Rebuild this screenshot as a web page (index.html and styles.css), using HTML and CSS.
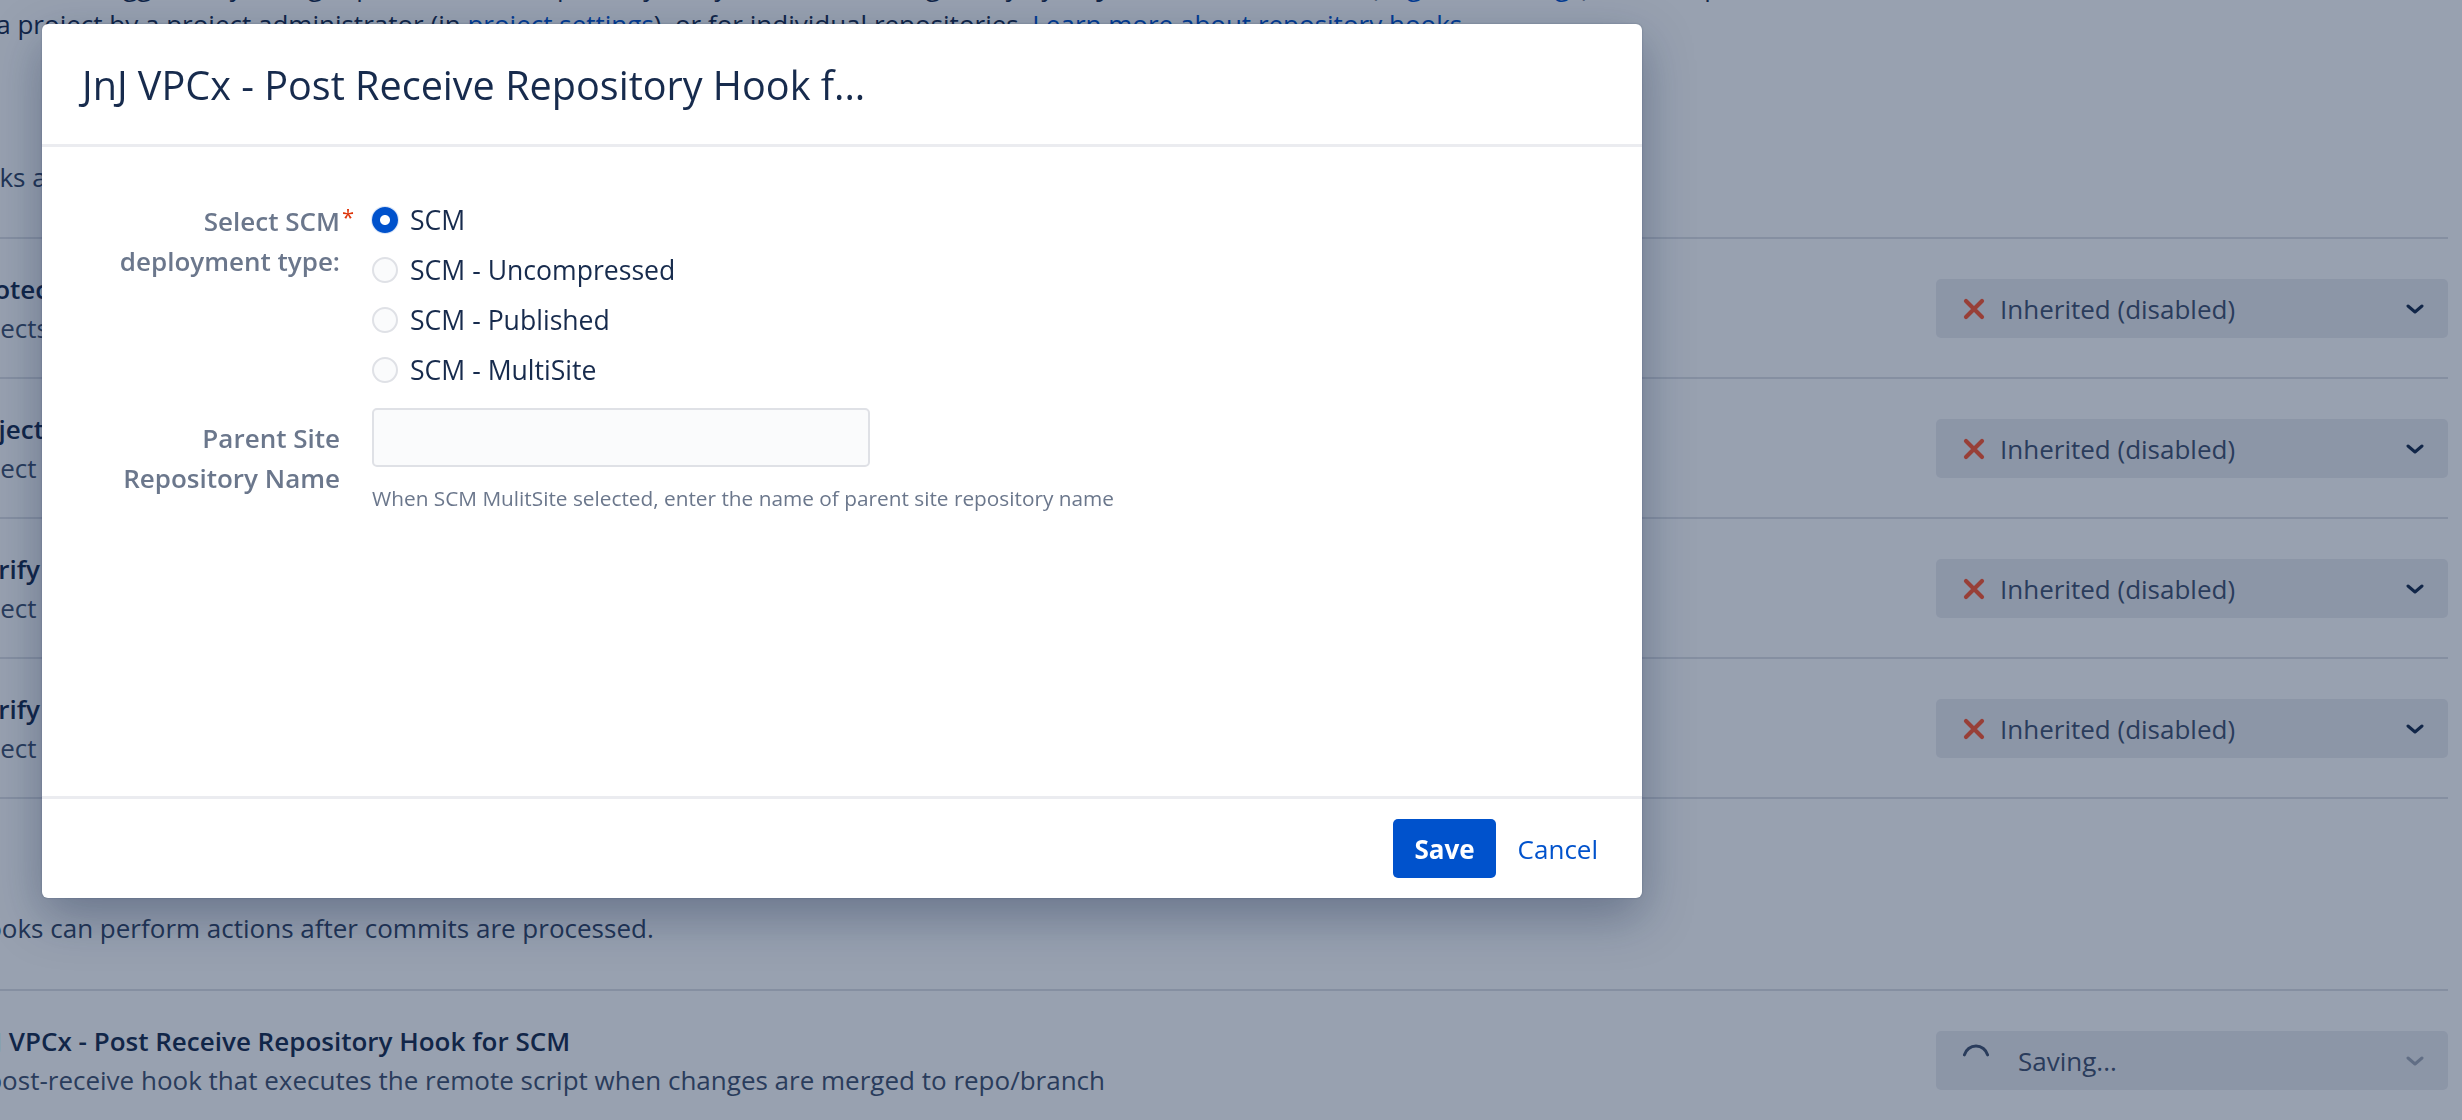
FILE: index.html
```html
<!DOCTYPE html>
<html lang="en">
<head>
<meta charset="utf-8">
<title>Repository hooks</title>
<link rel="stylesheet" href="styles.css">
</head>
<body>
<main class="page">
  <p class="intro">Hooks are triggered by changes pushed to the repository. They can be enabled globally by a <strong>system administrator</strong> (in <a href="#">global settings</a>), for all repositories<br>in a project by a project administrator (in <a href="#">project settings</a>), or for individual repositories. <a href="#">Learn more about repository hooks.</a></p>

  <section class="hook-section">
    <p class="section-desc shift">Hooks act on commits before they are accepted into the repository.</p>
    <ul class="hook-list">
      <li class="hook">
        <div class="hook-info">
          <h3 class="hook-title">Protect unmerged branch</h3>
          <p class="hook-desc">Rejects deletion of branches that have open pull requests</p>
        </div>
        <button class="hook-state" type="button">
          <svg class="state-x" viewBox="0 0 24 24" width="24" height="24"><path d="M4 4 L20 20 M20 4 L4 20" stroke="#FF5630" stroke-width="4.2" stroke-linecap="round"/></svg>
          <span class="state-label">Inherited (disabled)</span>
          <svg class="chev" viewBox="0 0 18 10" width="18" height="10"><path d="M2 2 L9 8 L16 2" fill="none" stroke="#172B4D" stroke-width="3" stroke-linecap="round" stroke-linejoin="round"/></svg>
        </button>
      </li>
      <li class="hook">
        <div class="hook-info">
          <h3 class="hook-title">Reject Force Push</h3>
          <p class="hook-desc">Reject all force pushes to this repository</p>
        </div>
        <button class="hook-state" type="button">
          <svg class="state-x" viewBox="0 0 24 24" width="24" height="24"><path d="M4 4 L20 20 M20 4 L4 20" stroke="#FF5630" stroke-width="4.2" stroke-linecap="round"/></svg>
          <span class="state-label">Inherited (disabled)</span>
          <svg class="chev" viewBox="0 0 18 10" width="18" height="10"><path d="M2 2 L9 8 L16 2" fill="none" stroke="#172B4D" stroke-width="3" stroke-linecap="round" stroke-linejoin="round"/></svg>
        </button>
      </li>
      <li class="hook">
        <div class="hook-info">
          <h3 class="hook-title">Verify Committer</h3>
          <p class="hook-desc">Reject commits not committed by the user pushing the changes</p>
        </div>
        <button class="hook-state" type="button">
          <svg class="state-x" viewBox="0 0 24 24" width="24" height="24"><path d="M4 4 L20 20 M20 4 L4 20" stroke="#FF5630" stroke-width="4.2" stroke-linecap="round"/></svg>
          <span class="state-label">Inherited (disabled)</span>
          <svg class="chev" viewBox="0 0 18 10" width="18" height="10"><path d="M2 2 L9 8 L16 2" fill="none" stroke="#172B4D" stroke-width="3" stroke-linecap="round" stroke-linejoin="round"/></svg>
        </button>
      </li>
      <li class="hook">
        <div class="hook-info">
          <h3 class="hook-title">Verify Commit Signature</h3>
          <p class="hook-desc">Reject commits that are not signed with a verified key</p>
        </div>
        <button class="hook-state" type="button">
          <svg class="state-x" viewBox="0 0 24 24" width="24" height="24"><path d="M4 4 L20 20 M20 4 L4 20" stroke="#FF5630" stroke-width="4.2" stroke-linecap="round"/></svg>
          <span class="state-label">Inherited (disabled)</span>
          <svg class="chev" viewBox="0 0 18 10" width="18" height="10"><path d="M2 2 L9 8 L16 2" fill="none" stroke="#172B4D" stroke-width="3" stroke-linecap="round" stroke-linejoin="round"/></svg>
        </button>
      </li>
    </ul>
  </section>

  <section class="hook-section">
    <p class="section-desc">Hooks can perform actions after commits are processed.</p>
    <ul class="hook-list">
      <li class="hook">
        <div class="hook-info">
          <h3 class="hook-title tight">JnJ VPCx - Post Receive Repository Hook for SCM</h3>
          <p class="hook-desc">A post-receive hook that executes the remote script when changes are merged to repo/branch</p>
        </div>
        <button class="hook-state is-saving" type="button">
          <svg class="spinner" viewBox="0 0 28 28" width="28" height="28"><path d="M2.4 10.9 A12 12 0 0 1 25.6 10.9" fill="none" stroke="#42526E" stroke-width="3" stroke-linecap="round"/></svg>
          <span class="state-label">Saving...</span>
          <svg class="chev" viewBox="0 0 18 10" width="18" height="10"><path d="M2 2 L9 8 L16 2" fill="none" stroke="#172B4D" stroke-width="3" stroke-linecap="round" stroke-linejoin="round"/></svg>
        </button>
      </li>
    </ul>
  </section>
</main>

<div class="blanket"></div>

<section class="dialog" role="dialog" aria-labelledby="dlg-title">
  <header class="dialog-header">
    <h2 class="dialog-title" id="dlg-title">JnJ VPCx - Post Receive Repository Hook f...</h2>
  </header>
  <div class="dialog-body">
    <form class="hook-form">
      <div class="field-group">
        <div class="field-label">Select SCM<span class="req">*</span> deployment type:</div>
        <div class="radio-list">
          <label class="radio-item"><input class="radio" type="radio" name="scm" checked><span>SCM</span></label>
          <label class="radio-item"><input class="radio" type="radio" name="scm"><span>SCM - Uncompressed</span></label>
          <label class="radio-item"><input class="radio" type="radio" name="scm"><span>SCM - Published</span></label>
          <label class="radio-item"><input class="radio" type="radio" name="scm"><span>SCM - MultiSite</span></label>
        </div>
      </div>
      <div class="field-group field-text">
        <label class="field-label pad" for="parent-repo">Parent Site Repository Name</label>
        <div class="field-control">
          <input class="text-input" id="parent-repo" type="text">
          <div class="help">When SCM MulitSite selected, enter the name of parent site repository name</div>
        </div>
      </div>
    </form>
  </div>
  <footer class="dialog-footer">
    <button class="btn-primary" type="button">Save</button>
    <button class="btn-link" type="button">Cancel</button>
  </footer>
</section>
</body>
</html>
```

FILE: styles.css
```css
* { box-sizing: border-box; }

html, body {
  margin: 0;
  padding: 0;
  height: 100%;
  overflow: hidden;
}

body {
  font-family: "Open Sans", "Noto Sans", sans-serif;
  font-size: 26px;
  color: #172B4D;
  background: #ffffff;
}

/* ---------- background page ---------- */
.page {
  margin-left: -33px;
  padding-right: 14px;
}

.intro {
  margin: -33px 0 0;
  font-size: 26px;
  line-height: 38px;
  white-space: nowrap;
}

.intro a {
  color: #0052CC;
  text-decoration: none;
}

.section-desc {
  margin: 114.5px 0 40px;
  line-height: 39px;
  color: #344563;
}

.section-desc.shift {
  margin-left: -18px;
}

.hook-section + .hook-section .section-desc {
  margin-top: 110px;
  margin-bottom: 41px;
}

.hook-list {
  list-style: none;
  margin: 0;
  padding: 0;
  border-bottom: 2px solid #DFE1E6;
}

.hook {
  display: flex;
  align-items: center;
  justify-content: space-between;
  border-top: 2px solid #DFE1E6;
  padding: 31px 0 29px;
}

.hook-title {
  margin: 0;
  font-size: 26px;
  font-weight: 600;
  line-height: 39px;
  white-space: nowrap;
}

.hook-title.tight {
  margin-left: 3px;
}

.hook-desc {
  margin: 0 0 0 -4px;
  line-height: 39px;
  color: #42526E;
  white-space: nowrap;
}

.hook-state {
  flex: none;
  width: 512px;
  height: 59px;
  display: flex;
  align-items: center;
  padding: 0 24px 0 26px;
  border: none;
  border-radius: 5px;
  background: #EBECF0;
  font: inherit;
  color: #42526E;
  text-align: left;
}

.state-x {
  flex: none;
  margin-right: 14px;
}

.state-label {
  flex: 1;
  white-space: nowrap;
}

.chev {
  flex: none;
}

.spinner {
  flex: none;
  margin: -6px 28px 0 0;
}

.is-saving .chev {
  opacity: 0.35;
}

/* ---------- blanket + dialog ---------- */
.blanket {
  position: fixed;
  inset: 0;
  background: rgba(9, 30, 66, 0.42);
}

.dialog {
  position: fixed;
  left: 42px;
  top: 24px;
  width: 1600px;
  height: 874px;
  display: flex;
  flex-direction: column;
  background: #ffffff;
  border-radius: 6px;
  font-size: 26.6px;
  box-shadow: 0 0 2px rgba(9, 30, 66, 0.31), 0 18px 50px rgba(9, 30, 66, 0.34);
}

.dialog-header {
  flex: none;
  height: 123px;
  padding: 4px 40px 0;
  display: flex;
  align-items: center;
  border-bottom: 3px solid #EBECF0;
}

.dialog-title {
  margin: 0;
  font-size: 39.6px;
  font-weight: 500;
  line-height: 1.2;
  color: #172B4D;
  white-space: nowrap;
}

.dialog-body {
  flex: 1;
  padding: 48px 40px 0;
}

.field-group {
  display: grid;
  grid-template-columns: 258px 1fr;
  column-gap: 32px;
  align-items: start;
}

.field-label {
  padding-top: 5.5px;
  text-align: right;
  font-size: 26px;
  font-weight: 600;
  line-height: 40px;
  color: #6B778C;
}

.field-label.pad {
  padding-top: 10px;
  line-height: 40px;
}

.req {
  position: absolute;
  margin-left: 2px;
  color: #DE350B;
  font-weight: 400;
  font-size: 22px;
  line-height: 30px;
}

.radio-list {
  display: flex;
  flex-direction: column;
}

.radio-item {
  height: 50px;
  display: flex;
  align-items: center;
  gap: 12px;
  color: #172B4D;
  white-space: nowrap;
}

.radio {
  appearance: none;
  -webkit-appearance: none;
  flex: none;
  margin: 0;
  width: 26px;
  height: 26px;
  border-radius: 50%;
  border: 2px solid #DFE1E6;
  background: #FAFBFC;
}

.radio:checked {
  border-color: #0052CC;
  background: radial-gradient(circle, #ffffff 0 4.5px, #0052CC 5.5px);
  box-shadow: 0 0 0 1px rgba(0, 82, 204, 0.15);
}

.field-text {
  margin-top: 13px;
}

.text-input {
  display: block;
  width: 498px;
  height: 59px;
  margin: 0;
  border: 2px solid #DFE1E6;
  border-radius: 5px;
  background: #FAFBFC;
  font: inherit;
}

.help {
  margin-top: 17px;
  font-size: 20.8px;
  line-height: 28px;
  color: #6B778C;
  white-space: nowrap;
}

.dialog-footer {
  flex: none;
  height: 102px;
  display: flex;
  align-items: center;
  justify-content: flex-end;
  gap: 22px;
  padding: 0 44px;
  border-top: 3px solid #EBECF0;
}

.btn-primary {
  height: 59px;
  padding: 0 21px;
  border: none;
  border-radius: 5px;
  background: #0052CC;
  color: #ffffff;
  font: inherit;
  font-size: 26px;
  font-weight: 700;
}

.btn-link {
  height: 59px;
  padding: 0;
  border: none;
  background: none;
  color: #0052CC;
  font: inherit;
  font-size: 26px;
}
```
